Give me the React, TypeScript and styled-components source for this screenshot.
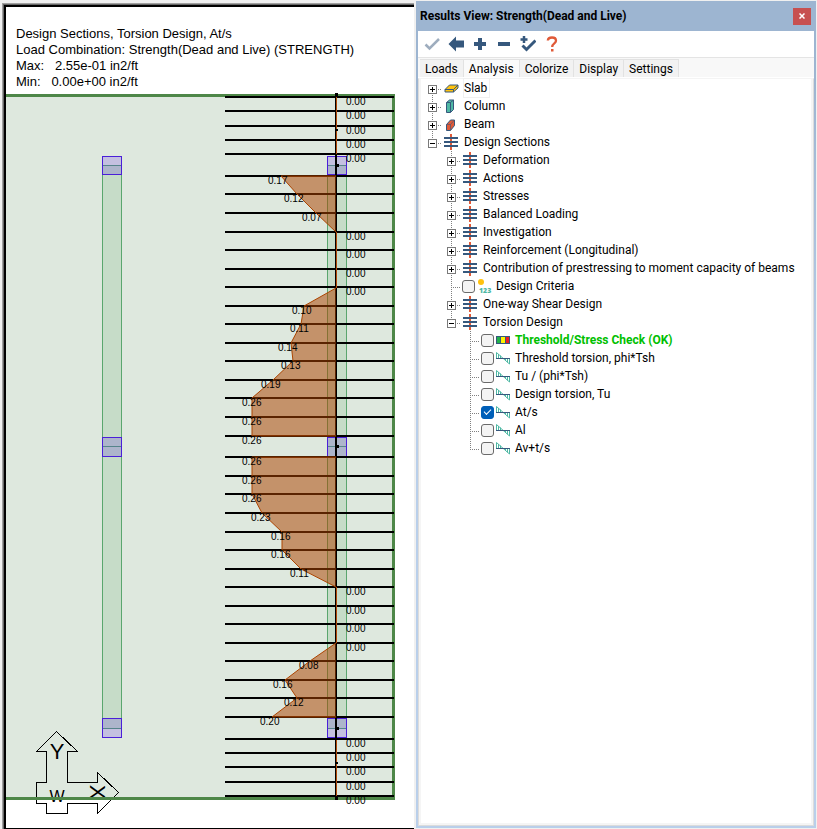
import React, { useState } from "react";
import styled, { createGlobalStyle, css } from "styled-components";

const GlobalStyle = createGlobalStyle`
  *, *::before, *::after { box-sizing: border-box; }
  body {
    margin: 0;
    background: #f0f0f0;
    color: #000;
    font: 12px/18px Roboto, sans-serif;
  }
  button, input { font: inherit; color: inherit; margin: 0; padding: 0; }
`;

const Workspace = styled.div`
  display: grid;
  grid-template-columns: minmax(0, 1fr) 401px;
  column-gap: 2px;
  min-height: 100vh;
`;

/* ---------- Plan view ---------- */

const PlanFrame = styled.main`
  display: flex;
  margin: 3px 0 0 2px;
  border: solid #a0a0a0;
  border-width: 1px 0 0 1px;
`;

const PlanWell = styled.div`
  flex: 1;
  min-width: 0;
  display: flex;
  border: solid #696969;
  border-width: 1px 0 0 1px;
`;

const PlanSheet = styled.div`
  flex: 1;
  min-width: 0;
  overflow: hidden;
  background: #fff;
  border: solid #000;
  border-width: 2px 0 1px 2px;
`;

const PlanCaption = styled.header`
  height: 85px;
  padding: 19px 0 0 10px;
  font: 13px/16px "Liberation Sans", sans-serif;
  white-space: pre;
`;

const Drawing = styled.svg`
  display: block;
  font-family: "Liberation Sans", sans-serif;
`;

const GREEN = "#4e8748";
const AXIS_X = 336;

type Point = [number, number];

const regions: Point[][] = [
  [[336, 176], [281, 176], [297, 194], [316, 213], [336, 232]],
  [[336, 288], [304, 306], [301, 324], [291, 343], [293, 361], [273, 380], [252, 398], [252, 436], [336, 436]],
  [[336, 457], [252, 457], [252, 494], [262, 513], [282, 532], [282, 550], [301, 569], [336, 587]],
  [[336, 643], [310, 661], [285, 680], [297, 698], [272, 717], [336, 717]],
];

/* y of each design section, the value, and the left edge of its label */
const sections: [number, string, number][] = [
  [97, "0.00", 346], [111, "0.00", 346], [126, "0.00", 346], [140, "0.00", 346],
  [154, "0.00", 346], [176, "0.17", 268], [194, "0.12", 284], [213, "0.07", 302],
  [232, "0.00", 346], [250, "0.00", 346], [269, "0.00", 346], [287, "0.00", 346],
  [306, "0.10", 292], [324, "0.11", 290], [343, "0.14", 278], [361, "0.13", 281],
  [380, "0.19", 261], [398, "0.26", 242], [417, "0.26", 242], [436, "0.26", 242],
  [457, "0.26", 242], [476, "0.26", 242], [494, "0.26", 242], [513, "0.23", 251],
  [532, "0.16", 271], [550, "0.16", 271], [569, "0.11", 290], [587, "0.00", 346],
  [606, "0.00", 346], [624, "0.00", 346], [643, "0.00", 346], [661, "0.08", 299],
  [680, "0.16", 273], [698, "0.12", 284], [717, "0.20", 260], [739, "0.00", 346],
  [753, "0.00", 346], [767, "0.00", 346], [782, "0.00", 346], [796, "0.00", 346],
];

const columnsAt: [number, number, number, string, string][] = [
  [156, 19, 165, "#c4c0e0", "#adb5cb"],
  [437, 20, 446, "#adb5cb", "#adb5cb"],
  [718, 20, 728, "#adb5cb", "#c4c0e0"],
];

function BeamStrip({ x }: { x: number }) {
  return (
    <g>
      <rect x={x + 0.5} y={166} width={19} height={562} fill="#c6dcc8" stroke="#5aa66e" />
      {columnsAt.map(([y, h, mid, top, bottom]) => (
        <g key={y}>
          <rect x={x} y={y} width={20} height={mid - y} fill={top} />
          <rect x={x} y={mid} width={20} height={y + h - mid} fill={bottom} />
          <rect x={x} y={mid} width={20} height={1} fill="#55848a" />
          <rect x={x + 0.5} y={y + 0.5} width={19} height={h - 1} fill="none" stroke="#4a1fd8" />
        </g>
      ))}
    </g>
  );
}

function Plan() {
  return (
    <Drawing width={408} height={736} viewBox="6 92 408 736" role="img" aria-label="Torsion design along the support line">
      <rect x={6} y={95} width={388} height={704} fill="#dee8de" />
      <g fill={GREEN}>
        <rect x={6} y={94} width={389} height={3} />
        <rect x={392} y={95} width={3} height={704} />
      </g>
      <BeamStrip x={102} />
      <BeamStrip x={327} />

      <path
        d="M56.5 731.5 36.5 751.5H46.5V782.5H36.5V803.5H46.5V813.5H67.5V803.5H97.5V813.5L118.5 792.5 97.5 772.5V782.5H67.5V751.5H77.5Z"
        fill="none"
        stroke="#000"
        shapeRendering="crispEdges"
      />
      <g textAnchor="middle">
        <text x={57} y={759} fontSize={22}>Y</text>
        <text x={57} y={802} fontSize={16}>W</text>
        <text fontSize={22} transform="translate(90 792) rotate(90)">X</text>
      </g>
      <rect x={6} y={797} width={389} height={3} fill={GREEN} />

      <g shapeRendering="crispEdges">
        {sections.map(([y]) => (
          <rect key={y} x={225} y={y - 1} width={169} height={2} />
        ))}
        <rect x={AXIS_X - 1} y={94} width={2} height={706} />
        <path d="M336.5 97V154M336.5 232V288M336.5 587V643M336.5 740V796" stroke="#b04a08" />
      </g>
      {regions.map((pts, i) => {
        const list = pts.map((p) => p.join(",")).join(" ");
        return (
          <g key={i}>
            <polygon points={list} fill="#ac4400" fillOpacity={0.52} />
            <polyline points={list} fill="none" stroke="#ac4400" />
          </g>
        );
      })}
      <g>
        <rect x={335} y={93} width={3} height={3} />
        <rect x={336} y={129} width={2} height={2} />
        <rect x={336} y={164} width={3} height={3} />
        <rect x={336} y={445} width={3} height={3} />
        <rect x={336} y={727} width={3} height={3} />
        <rect x={336} y={762} width={2} height={2} />
        <rect x={335} y={797} width={3} height={3} />
      </g>
      <g fontSize={10}>
        {sections.map(([y, value, x]) => (
          <text key={y} x={x} y={y + 8}>{value}</text>
        ))}
      </g>
    </Drawing>
  );
}

/* ---------- Results panel ---------- */

const Panel = styled.aside`
  display: flex;
  flex-direction: column;
  margin: 1px 1px 1px 0;
  padding: 0 2px 2px;
  background: linear-gradient(#9db5d1, #9db5d1 80px, #b9cfea 400px);
`;

const TitleBar = styled.header`
  display: flex;
  align-items: center;
  justify-content: space-between;
  height: 30px;
  padding: 0 3px 0 2px;
`;

const Title = styled.h1`
  margin: 0;
  font-size: 12px;
  line-height: 18px;
  font-weight: 700;
  white-space: nowrap;
`;

const CloseButton = styled.button`
  width: 18px;
  height: 17px;
  border: 0;
  background: #c75050;
  display: grid;
  place-items: center;
`;

const Toolbar = styled.div`
  display: flex;
  align-items: center;
  gap: 8px;
  height: 27px;
  padding: 0 6px;
  background: #fff;
  border-bottom: 1px solid #e4e4e4;
`;

const ToolButton = styled.button`
  width: 16px;
  height: 20px;
  border: 0;
  background: none;
  display: grid;
  place-items: center;
`;

const TabStrip = styled.div`
  display: flex;
  height: 20px;
  padding: 1px 0 0 2px;
  background: #f8f8f8;
  border-bottom: 1px solid #fff;
`;

const Tab = styled.button<{ $active?: boolean }>`
  height: 18px;
  padding: 0 5px;
  border: solid #e2e2e2;
  border-width: 1px 1px 0 0;
  background: ${(p) => (p.$active ? "#fafafa" : "#f2f2f2")};
  line-height: 16px;
`;

const TreeWell = styled.div`
  flex: 1;
  display: flex;
  background: #fff;
  border: 1px solid #dcdcdc;
  border-top-color: #f4f4f4;
`;

const Tree = styled.ul`
  flex: 1;
  min-width: 0;
  margin: 0;
  padding: 0 0 0 2px;
  list-style: none;
  border: solid #f5f5f5;
  border-width: 0 2px 2px;
`;

const Row = styled.li`
  display: flex;
  align-items: center;
  height: 18px;
  white-space: nowrap;
`;

const Indent = styled.span<{ $depth: number }>`
  flex: none;
  width: ${(p) => p.$depth * 19}px;
`;

const dots = (dir: string) => `repeating-linear-gradient(${dir}, #808080 0 1px, transparent 1px 2px)`;

const Guide = styled.span<{ $up: boolean; $down: boolean }>`
  flex: none;
  width: 19px;
  height: 18px;
  display: grid;
  place-items: center;
  background-repeat: no-repeat;
  background-image: ${dots("to right")}, ${dots("to bottom")};
  background-size: 10px 1px, 1px ${(p) => (p.$up && p.$down ? 18 : 10)}px;
  background-position: 9px 10px, 9px ${(p) => (p.$up ? 0 : 10)}px;
`;

const Expander = styled.button`
  width: 9px;
  height: 9px;
  margin-top: 3px;
  border: 1px solid #7a7a7a;
  background: #fff;
  display: grid;
  place-items: center;
  svg { display: block; }
`;

const Check = styled.input`
  appearance: none;
  flex: none;
  width: 13px;
  height: 13px;
  margin: 0 1px;
  border: 1px solid #6a6a6a;
  border-radius: 3px;
  background: #f4f4f4;
  display: grid;
  place-items: center;
  &:checked {
    border-color: #005fb8;
    background: #005fb8;
  }
  &:checked::after {
    content: "";
    width: 7px;
    height: 4px;
    border: solid #fff;
    border-width: 0 0 1px 1px;
    transform: translateY(-1px) rotate(-45deg);
  }
`;

const IconSlot = styled.span<{ $narrow: boolean }>`
  flex: none;
  width: ${(p) => (p.$narrow ? 20 : 22)}px;
  padding-left: ${(p) => (p.$narrow ? 1 : 2)}px;
  svg { display: block; }
`;

const Name = styled.label<{ $tone?: "pass"; $current?: boolean }>`
  ${(p) => p.$tone === "pass" && css`
    color: #00c000;
    font-weight: 700;
  `}
  ${(p) => p.$current && css`
    padding-right: 2px;
    box-shadow: 0 0 0 1px #f0f0f0;
  `}
`;

const NAVY = "#36587d";
const RED = "#e05a38";
const TEAL = "#4fb8a4";

const icons: Record<string, React.ReactNode> = {
  slab: (
    <svg width="16" height="16" viewBox="0 0 16 16" strokeLinejoin="round">
      <path d="M1 9.500 5.500 5H14L9.500 9.500Z" fill="#ffc20e" stroke={NAVY} />
      <path d="M1 9.500H9.500V12H1Z" fill="#ffc20e" stroke={NAVY} />
      <path d="M9.500 9.500 14 5V8L9.500 12Z" fill="#ffc20e" stroke={NAVY} />
    </svg>
  ),
  column: (
    <svg width="14" height="16" viewBox="0 0 14 16" strokeLinejoin="round">
      <path d="M2.500 4.500 5.500 2H9.500V11.500L6.500 14.500H2.500Z" fill={TEAL} stroke={NAVY} />
      <path d="M2.500 4.500H6.500V14.500M6.500 4.500 9.500 2" fill="none" stroke={NAVY} />
    </svg>
  ),
  beam: (
    <svg width="14" height="16" viewBox="0 0 14 16" strokeLinejoin="round">
      <path d="M2.500 8.500 6.500 4H10.500V9.500L6.500 14.500H2.500Z" fill={RED} stroke={NAVY} />
      <path d="M2.500 8.500H6.500V14.500M6.500 8.500 10.500 4" fill="none" stroke={NAVY} strokeWidth="0.600" />
    </svg>
  ),
  sections: (
    <svg width="14" height="16" viewBox="0 0 14 16">
      <rect x="6" width="2" height="16" fill={RED} />
      <path d="M0 4H14M0 8H14M0 12H14" stroke={NAVY} strokeWidth="2" />
    </svg>
  ),
  criteria: (
    <svg width="16" height="16" viewBox="0 0 16 16">
      <circle cx="4" cy="4" r="3" fill="#ffc20e" />
      <text x="2" y="15" fontFamily="Open Sans, sans-serif" fontWeight="800" fontSize="7" fill={TEAL}>123</text>
    </svg>
  ),
  legend: (
    <svg width="14" height="16" viewBox="0 0 14 16">
      <rect x="0" y="4" width="14" height="8" fill={NAVY} />
      <rect x="1" y="5" width="3" height="6" fill="#22b14c" />
      <rect x="5" y="5" width="4" height="6" fill="#fff200" />
      <rect x="10" y="5" width="3" height="6" fill="#ed1c24" />
    </svg>
  ),
  diagram: (
    <svg width="14" height="16" viewBox="0 0 14 16" fill="none" stroke={TEAL}>
      <path d="M0.500 8V2.500L13.500 14V8" />
      <path d="M2.500 8V4M4.500 8V5.500M9.500 8V10.500M11.500 8V12.500" />
      <path d="M0 8.500H14" stroke={NAVY} />
    </svg>
  ),
};

const toolIcons: [string, React.ReactNode][] = [
  ["Apply", <path d="M1.500 8.500 5.500 12.500 15 3" fill="none" stroke="#9eadbe" strokeWidth="2.500" />],
  ["Back", <path d="M0.500 8 8 0.500V4.500H16V11.500H8V15.500Z" fill={NAVY} />],
  ["Expand all", <path d="M6 2H10V6H14V10H10V14H6V10H2V6H6Z" fill={NAVY} />],
  ["Collapse all", <path d="M2 6H14V10H2Z" fill={NAVY} />],
  ["Check all", <g fill="none" stroke={NAVY}><path d="M4 0V7M0.500 3.500H7.500" strokeWidth="2.500" /><path d="M2.500 9.500 6.500 13.500 15.500 4.500" strokeWidth="3" /></g>],
  ["Help", <g><path d="M3.800 4.500C4 2.500 5.500 1.500 8 1.500C10.500 1.500 12 3 12 4.800C12 7.500 8.200 7.300 8.200 11" fill="none" stroke={RED} strokeWidth="2.300" /><rect x="7" y="13" width="2.500" height="2.500" fill={RED} /></g>],
];

type Node = {
  depth: number;
  label: string;
  icon: string;
  up?: boolean;
  down?: boolean;
  open?: boolean;
  check?: boolean;
  pass?: boolean;
};

const nodes: Node[] = [
  { depth: 0, label: "Slab", icon: "slab", up: false },
  { depth: 0, label: "Column", icon: "column" },
  { depth: 0, label: "Beam", icon: "beam" },
  { depth: 0, label: "Design Sections", icon: "sections", open: true, down: false },
  { depth: 1, label: "Deformation", icon: "sections" },
  { depth: 1, label: "Actions", icon: "sections" },
  { depth: 1, label: "Stresses", icon: "sections" },
  { depth: 1, label: "Balanced Loading", icon: "sections" },
  { depth: 1, label: "Investigation", icon: "sections" },
  { depth: 1, label: "Reinforcement (Longitudinal)", icon: "sections" },
  { depth: 1, label: "Contribution of prestressing to moment capacity of beams", icon: "sections" },
  { depth: 1, label: "Design Criteria", icon: "criteria", check: true },
  { depth: 1, label: "One-way Shear Design", icon: "sections" },
  { depth: 1, label: "Torsion Design", icon: "sections", open: true, down: false },
  { depth: 2, label: "Threshold/Stress Check (OK)", icon: "legend", check: true, pass: true },
  { depth: 2, label: "Threshold torsion, phi*Tsh", icon: "diagram", check: true },
  { depth: 2, label: "Tu / (phi*Tsh)", icon: "diagram", check: true },
  { depth: 2, label: "Design torsion, Tu", icon: "diagram", check: true },
  { depth: 2, label: "At/s", icon: "diagram", check: true },
  { depth: 2, label: "Al", icon: "diagram", check: true },
  { depth: 2, label: "Av+t/s", icon: "diagram", check: true, down: false },
];

const tabs = ["Loads", "Analysis", "Colorize", "Display", "Settings"];

function TreeRow({ node, index }: { node: Node; index: number }) {
  const { depth, label, icon, up = true, down = true, open, check, pass } = node;
  const id = `result-${index}`;
  return (
    <Row>
      <Indent $depth={depth} />
      <Guide $up={up} $down={down}>
        {!check && (
          <Expander type="button" aria-expanded={!!open} aria-label={`Toggle ${label}`}>
            <svg width="7" height="7" viewBox="0 0 7 7">
              <path d={open ? "M1 3.500H6" : "M1 3.500H6M3.500 1V6"} stroke="#000" />
            </svg>
          </Expander>
        )}
      </Guide>
      {check && <Check type="checkbox" id={id} defaultChecked={label === "At/s"} />}
      <IconSlot $narrow={!!check}>{icons[icon]}</IconSlot>
      <Name
        as={check ? "label" : "span"}
        htmlFor={check ? id : undefined}
        $tone={pass ? "pass" : undefined}
        $current={index === 0}
      >
        {label}
      </Name>
    </Row>
  );
}

export default function App() {
  const [tab, setTab] = useState("Analysis");
  return (
    <>
      <GlobalStyle />
      <Workspace>
        <PlanFrame>
          <PlanWell>
            <PlanSheet>
              <PlanCaption>
                <div>Design Sections, Torsion Design, At/s</div>
                <div>Load Combination: Strength(Dead and Live) (STRENGTH)</div>
                <div>{"Max:   2.55e-01 in2/ft"}</div>
                <div>{"Min:   0.00e+00 in2/ft"}</div>
              </PlanCaption>
              <Plan />
            </PlanSheet>
          </PlanWell>
        </PlanFrame>
        <Panel>
          <TitleBar>
            <Title>Results View: Strength(Dead and Live)</Title>
            <CloseButton type="button" aria-label="Close">
              <svg width="6" height="6" viewBox="0 0 6 6">
                <path d="M0.500 0.500 5.500 5.500M5.500 0.500 0.500 5.500" stroke="#fff" strokeWidth="1.500" />
              </svg>
            </CloseButton>
          </TitleBar>
          <Toolbar>
            {toolIcons.map(([name, art]) => (
              <ToolButton key={name} type="button" aria-label={name}>
                <svg width="16" height="16" viewBox="0 0 16 16">{art}</svg>
              </ToolButton>
            ))}
          </Toolbar>
          <TabStrip role="tablist">
            {tabs.map((t) => (
              <Tab key={t} type="button" role="tab" aria-selected={t === tab} $active={t === tab} onClick={() => setTab(t)}>
                {t}
              </Tab>
            ))}
          </TabStrip>
          <TreeWell>
            <Tree>
              {nodes.map((node, i) => (
                <TreeRow key={node.label} node={node} index={i} />
              ))}
            </Tree>
          </TreeWell>
        </Panel>
      </Workspace>
    </>
  );
}
